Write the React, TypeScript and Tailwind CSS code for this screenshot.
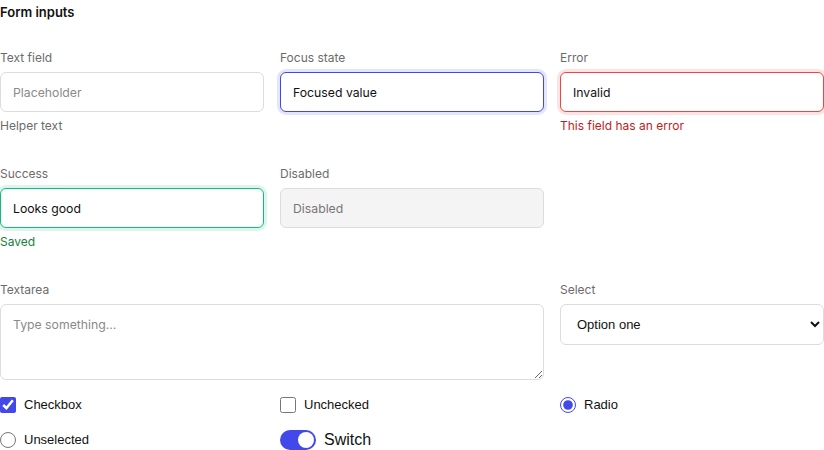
import React from "react";

const label = "block text-[12px] leading-4 text-[#6b6b6b] mb-[6px]";
const field =
  "block w-full h-10 rounded-md border bg-white px-3 text-[12.25px] text-[#111] placeholder:text-[#8a8a8a] outline-none";

const Switch = ({ on }: { on: boolean }) => (
  <span
    className={`relative inline-flex h-5 w-9 items-center rounded-full ${
      on ? "bg-[#4349e8]" : "bg-gray-300"
    }`}
  >
    <span
      className={`absolute h-4 w-4 rounded-full bg-white ${
        on ? "left-[18px]" : "left-[2px]"
      }`}
    />
  </span>
);

export default function App() {
  return (
    <div className="w-[824px] h-[450px] bg-white text-[#111] font-[Inter,'Liberation_Sans',sans-serif]">
      <h2 className="pt-[2px] text-[13px] font-semibold leading-5">Form inputs</h2>

      <div className="mt-[28px] grid grid-cols-3 gap-x-4 gap-y-8">
        <div>
          <label className={label}>Text field</label>
          <input className={`${field} border-[#dcdcdc]`} placeholder="Placeholder" />
          <p className="mt-[6px] text-[12px] leading-4 text-[#6b6b6b]">Helper text</p>
        </div>
        <div>
          <label className={label}>Focus state</label>
          <input
            className={`${field} border-[#4349e8] shadow-[0_0_0_3px_#e3e5fc]`}
            defaultValue="Focused value"
          />
        </div>
        <div>
          <label className={label}>Error</label>
          <input
            className={`${field} border-[#ef4444] shadow-[0_0_0_3px_#fde4e4]`}
            defaultValue="Invalid"
          />
          <p className="mt-[6px] text-[12px] leading-4 text-[#c01c1c]">This field has an error</p>
        </div>

        <div>
          <label className={label}>Success</label>
          <input
            className={`${field} border-[#10b981] shadow-[0_0_0_3px_#dcf6ec]`}
            defaultValue="Looks good"
          />
          <p className="mt-[6px] text-[12px] leading-4 text-[#15803d]">Saved</p>
        </div>
        <div>
          <label className={label}>Disabled</label>
          <input
            className={`${field} border-[#dcdcdc] !bg-[#f4f4f4] placeholder:text-[#777]`}
            placeholder="Disabled"
            disabled
          />
        </div>
        <div />

        <div className="col-span-2">
          <label className={label}>Textarea</label>
          <textarea
            className="block h-[76px] w-full rounded-md border border-[#dcdcdc] bg-white px-3 py-[10px] text-[12.25px] leading-5 placeholder:text-[#8a8a8a] outline-none"
            placeholder="Type something…"
          />
        </div>
        <div>
          <label className={label}>Select</label>
          <select className="block h-[41px] w-full rounded-md border border-[#dcdcdc] bg-white px-3 font-['Liberation_Sans',Arial,sans-serif] text-[13px] text-[#111] outline-none">
            <option>Option one</option>
            <option>Option two</option>
          </select>
        </div>
      </div>

      <div className="mt-[17px] grid grid-cols-3 gap-x-4 gap-y-[17px] font-['Liberation_Sans',Arial,sans-serif] text-[13px]">
        <label className="flex h-4 items-center gap-2">
          <input type="checkbox" defaultChecked className="m-0 h-4 w-4 accent-[#4349e8]" />
          Checkbox
        </label>
        <label className="flex h-4 items-center gap-2">
          <input type="checkbox" className="m-0 h-4 w-4 accent-[#4349e8]" />
          Unchecked
        </label>
        <label className="flex h-4 items-center gap-2">
          <input type="radio" name="r" defaultChecked className="m-0 h-4 w-4 accent-[#4349e8]" />
          Radio
        </label>

        <label className="flex h-5 items-center gap-2">
          <input type="radio" name="r2" className="m-0 h-4 w-4 accent-[#4349e8]" />
          Unselected
        </label>
        <label className="flex h-5 items-center gap-2 text-[16px]">
          <Switch on />
          Switch
        </label>
        <div />
      </div>
    </div>
  );
}
